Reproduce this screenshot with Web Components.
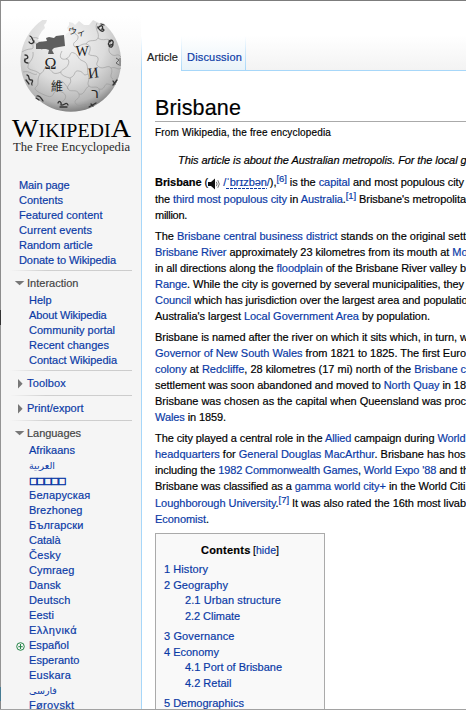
<!DOCTYPE html>
<html lang="en">
<head>
<meta charset="utf-8">
<title>Brisbane</title>
<style>
html,body{margin:0;height:710px;overflow:hidden;background:#fff}
body{font:11px/16px "Liberation Sans",Arial,sans-serif;color:#000;-webkit-text-stroke-width:.18px}
</style>
</head>
<body>
<wiki-page></wiki-page>
<script>
/* A run of text whose tracking is adjusted to occupy a given width. */
class FitLine extends HTMLElement {
  constructor() {
    super();
    this.attachShadow({mode: 'open'}).innerHTML = '<style>:host{display:inline-block;width:max-content;white-space:nowrap;vertical-align:baseline}</style><slot></slot>';
  }
  connectedCallback() { this.fit(this.getAttribute('w')); }
  fit(w) {
    if (!w) return;
    const inner = this.querySelector(':scope > slot');
    const text = inner ? inner.assignedNodes().map(n => n.textContent).join('') : this.textContent;
    this.style.letterSpacing = '0px';
    const natural = this.getBoundingClientRect().width;
    this.style.letterSpacing = ((w - natural) / [...text].length) + 'px';
  }
}
customElements.define('fit-line', FitLine);

const make = (name, html, setup) => customElements.define(name, class extends HTMLElement {
  constructor() {
    super();
    this.attachShadow({mode: 'open'}).innerHTML = html;
  }
  connectedCallback() { if (setup) setup.call(this); }
});

make('wiki-page', `
<style>
:host{display:grid;grid-template-columns:141px 325px;grid-template-rows:708px;width:466px;height:710px;box-sizing:border-box;border-top:1px solid #7c7c7c;border-bottom:1px solid #a2a2a2;overflow:hidden;position:relative;background:#fff}
.edge{position:absolute;left:0;top:0;width:1px;height:708px;background:linear-gradient(#8d8d8d 309px,#333 309px,#333 324px,#949494 324px,#949494 686px,#467b93 686px,#467b93 700px,#888 700px)}
</style>
<side-panel></side-panel><main-column></main-column><div class="edge"></div>`);

make('side-panel', `
<style>
:host{display:flex;flex-direction:column;box-sizing:border-box;height:708px;overflow:hidden;background:linear-gradient(#fff 0,#fff 15px,#f5f5f5 68px)}
wiki-logo{margin-bottom:16px}
.first{padding-left:19px;height:92px;flex:none}
</style>
<wiki-logo></wiki-logo>
<div class="first">
<nav-link w="50.5">Main page</nav-link><nav-link w="44">Contents</nav-link><nav-link w="83.5">Featured content</nav-link><nav-link w="73">Current events</nav-link><nav-link w="73.5">Random article</nav-link><nav-link w="97">Donate to Wikipedia</nav-link>
</div>
<nav-group open label="Interaction" w="51.5">
<nav-link w="22.5">Help</nav-link><nav-link w="77.5">About Wikipedia</nav-link><nav-link w="86">Community portal</nav-link><nav-link w="80">Recent changes</nav-link><nav-link w="88">Contact Wikipedia</nav-link>
</nav-group>
<nav-group label="Toolbox" w="39"></nav-group>
<nav-group label="Print/export" w="56.5"></nav-group>
<nav-group open label="Languages" w="54">
<nav-link w="46">Afrikaans</nav-link><nav-link style="font-family:'DejaVu Sans',sans-serif;font-size:9.5px;-webkit-text-stroke-width:0">العربية</nav-link><nav-link style="font-family:'DejaVu Sans',sans-serif;font-size:9.5px;-webkit-text-stroke-width:.5px" w="35.5">□□□□□</nav-link><nav-link w="61.5">Беларуская</nav-link><nav-link w="53.5">Brezhoneg</nav-link><nav-link w="54.5">Български</nav-link><nav-link w="31.5">Català</nav-link><nav-link w="32">Česky</nav-link><nav-link w="45.5">Cymraeg</nav-link><nav-link w="32">Dansk</nav-link><nav-link w="41.5">Deutsch</nav-link><nav-link w="25">Eesti</nav-link><nav-link w="48">Ελληνικά</nav-link><nav-link featured w="40">Español</nav-link><nav-link w="50.5">Esperanto</nav-link><nav-link w="42">Euskara</nav-link><nav-link style="font-family:'DejaVu Sans',sans-serif;font-size:9.5px;-webkit-text-stroke-width:0">فارسی</nav-link><nav-link w="45.5">Føroyskt</nav-link>
</nav-group>`);

make('nav-link', `
<style>
:host{display:block;height:15px;line-height:15px;white-space:nowrap;color:#0a3aa6;position:relative}
svg{position:absolute;left:-13px;top:4px;display:none}
:host([featured]) svg{display:block}
</style>
<svg width="9" height="9" viewBox="0 0 9 9" fill="none" stroke="#258548"><circle cx="4.5" cy="4.5" r="3.8"/><path d="M4.5 2v5M2.3 4.7h4.4"/></svg>
<fit-line><slot></slot></fit-line>`, function () {
  this.shadowRoot.querySelector('fit-line').fit(this.getAttribute('w'));
});

make('nav-group', `
<style>
:host{display:block;height:25px;flex:none;margin-top:0;background:linear-gradient(90deg,transparent 10px,#d0d0d0 46px,#cccccc 132px,transparent 132px) top/100% 1px no-repeat}
:host([open]){height:100px}
:host(:last-of-type){height:300px}
.head{display:flex;height:26px;padding:6px 0 0 14px;box-sizing:border-box;line-height:15px;align-items:start}
svg{width:13px;height:13px;flex:none}
.list{padding-left:29px;margin-top:-3px}
.label{color:#0a3aa6;white-space:nowrap}
:host([open]) .label{color:#444}
.down{display:none}:host([open]) .down{display:block}:host([open]) .right{display:none}
</style>
<div class="head"><svg class="down" viewBox="0 0 13 13"><path d="M.8 5h9.6L5.6 9.3z" fill="#777"/></svg><svg class="right" viewBox="0 0 13 13"><path d="M4 3v9.6l4.6-4.8z" fill="#777"/></svg><fit-line class="label"></fit-line></div>
<div class="list"><slot></slot></div>`, function () {
  const l = this.shadowRoot.querySelector('.label');
  l.textContent = this.getAttribute('label');
  l.fit(this.getAttribute('w'));
});

make('wiki-logo', `
<style>:host{display:block;height:161px;flex:none;-webkit-text-stroke-width:0}svg{display:block}text{font-family:"Liberation Serif",serif}</style>
<svg width="141" height="161" viewBox="0 1 141 161">
<defs>
<radialGradient id="g" cx=".45" cy=".3" r=".72"><stop offset="0" stop-color="#f4f4f4"/><stop offset=".55" stop-color="#dcdcdc"/><stop offset=".85" stop-color="#b5b5b5"/><stop offset="1" stop-color="#777"/></radialGradient>
<clipPath id="c"><path d="M0 20H47L46 23 44 25 45 28 42 31 39 36 38 40 42 42 64 40 66 34 69 32 67 28 69 25 69 22 73 23 75 25 79 21 84 25 89 25 93 20 99 23 141 20V120H0z"/></clipPath>
</defs>
<g clip-path="url(#c)"><circle cx="70.8" cy="61.5" r="50.3" fill="url(#g)"/>
<g fill="none" stroke="#999" stroke-width=".6">
<path d="M22 52C29 47 34 51 33 46S39 42 42 50M33 52C34 60 29 61 28 66S35 69 40 74C46 71 43 65 48 68S52 76 61 72M40 74C36 80 40 84 36 87S42 94 47 96"/>
<path d="M62 51C58 58 62 60 66 59S70 66 64 69 61 76 70 78C77 75 73 70 79 71S82 77 88 74M66 59C72 56 69 51 74 53S77 59 83 61 87 70 88 74"/>
<path d="M73 29C73 35 79 34 78 38S72 42 74 46 81 43 86 44 91 49 89 53 97 54 98 58 94 64 99 67 108 64 111 68 108 77 113 79"/>
<path d="M86 44C89 38 96 43 98 38S94 29 97 23M98 38C103 42 108 37 110 41S106 50 111 54 117 52 121 57M111 68C116 66 118 71 121 68"/>
<path d="M23 72C30 70 33 76 37 74M47 96C55 99 52 90 58 91S67 95 65 99 57 102 61 110M70 78C73 84 66 85 68 89S77 88 79 94 72 99 76 104 87 100 89 108M88 74C91 79 86 83 89 86S97 85 99 89 95 97 99 101"/>
<path d="M79 94C84 96 85 88 89 86M99 89C105 91 104 83 108 84S112 87 117 82M58 91C55 82 61 79 64 83S67 86 68 89M42 42C38 36 32 37 30 40"/>
</g></g>
<path d="M36 44 39 42 47 41 46 38 49 37 54 38 56 36 64 35 65 46 59 47 54 48 52 50 54 54 48 54 49 50 46 49 36 49z" fill="#5f5f5f"/>
<g fill="#242424" text-anchor="middle">
<text x="50.5" y="69" font-size="16">Ω</text><text x="82" y="56" font-size="14">W</text>
<text x="93.5" y="78" font-size="15" transform="rotate(-7 93 74)">И</text>
<text x="57" y="91" font-size="12" style="font-family:'Noto Sans CJK TC',sans-serif">維</text>
<text x="95" y="98" font-size="14" style="font-family:'DejaVu Sans',sans-serif">ר</text>
<text x="77" y="35" font-size="9" style="font-family:'Noto Sans CJK JP',sans-serif" transform="rotate(8 77 31)">ウィ</text>
<g fill="none" stroke="#333" stroke-width="1.3" stroke-linecap="round">
<path d="M30 36C33 37 32 40 34 42M29 42C31 45 34 43 34 41"/>
<path d="M25 55C28 55 29 58 26 59S25 63 28 63M25 59V62"/>
<path d="M27 75C31 76 27 80 31 80S30 84 32 85M26 80 29 84"/>
<path d="M98 28C101 24 104 26 102 29 106 29 103 33 100 30S98 26 98 28M104 25 101 24"/>
<path d="M109 41C113 38 115 44 111 45S108 42 111 41M113 44C113 47 111 48 109 46"/>
<path d="M37 96C40 95 41 98 43 101M36 98 39 100"/>
<path d="M58 103C59 100 62 102 61 105 64 106 66 101 68 105M60 107H67"/>
<path d="M89 107 96 103M91 104 93 106M113 85 117 80M113 81 115 84"/>
</g>
<path d="M116 58 119 60 116 63 119 65M120 58V66" fill="none" stroke="#666"/>
</g>
<text x="12" y="137" font-size="18.5" textLength="119" lengthAdjust="spacingAndGlyphs"><tspan font-size="26">W</tspan>IKIPEDI<tspan font-size="26">A</tspan></text>
<text x="13" y="151.3" font-size="13.3" textLength="117" lengthAdjust="spacingAndGlyphs" fill="#2a2a2a">The Free Encyclopedia</text>
</svg>`);

make('main-column', `
<style>
:host{display:flex;flex-direction:column;height:708px;overflow:hidden;background:linear-gradient(#a7d7f9,#a7d7f9) 0 70px/1px 100% no-repeat}
wiki-article{padding-left:14px}
</style>
<tab-bar></tab-bar><wiki-article></wiki-article>`);

make('tab-bar', `
<style>
:host{display:flex;height:70px;flex:none;align-items:flex-end;background:linear-gradient(#fff 34px,#f3f3f3 69px)}
.tab{height:35px;box-sizing:border-box;padding:13px 0 0 6px;white-space:nowrap;line-height:16px}
.a{width:41px;color:#222;background:linear-gradient(#fff0,#a7d7f9) right/1px 100% no-repeat,linear-gradient(#fff0,#a7d7f9) left/1px 100% no-repeat,#fff}
.d{width:64px;padding-left:5px;color:#0a3aa6;border-bottom:1px solid #a7d7f9;background:linear-gradient(#fff0,#a7d7f9) right/1px 100% no-repeat,linear-gradient(#fff,#e9f3f9)}
.rest{flex:1;height:1px;background:#a7d7f9}
</style>
<div class="tab a"><fit-line w="31">Article</fit-line></div><div class="tab d"><fit-line w="55">Discussion</fit-line></div><div class="rest"></div>`);

make('wiki-article', `
<style>
:host{display:flex;flex-direction:column}
h1{font:21.5px/30px "Liberation Sans",Arial,sans-serif;margin:22px 0 0;height:28px;border-bottom:1px solid #aaa;white-space:nowrap}
.from{line-height:14px;height:14px;margin-top:4px;font-size:10px}
section{margin:0 0 5px;display:grid;grid-auto-rows:min-content}
section div,.hat{height:16px;white-space:nowrap}
.hat{font-style:italic;padding-left:23px;margin:12px 0 6px}
.up{padding-top:1px}
a{color:#0a3aa6}
sup{font-size:9.5px;line-height:0;vertical-align:4px;color:#0a3aa6}
.spk{display:inline-block;vertical-align:-4px;width:13px;height:12px;line-height:0;margin:-4px 2px -4px 0}
.ipa{font-family:"Liberation Sans","DejaVu Sans",sans-serif;background:repeating-linear-gradient(90deg,#0a3aa6 0 3px,transparent 3px 4px) bottom/100% 1px no-repeat;padding-bottom:1px}
</style>
<h1><fit-line w="86">Brisbane</fit-line></h1>
<div class="from"><fit-line w="176">From Wikipedia, the free encyclopedia</fit-line></div>
<div class="hat"><fit-line w="288.5">This article is about the Australian metropolis. For the local g</fit-line></div>
<section>
<div><fit-line w="309"><b>Brisbane</b> (<span class="spk"><svg width="13" height="12" viewBox="0 0 13 12"><path d="M0 4h3l4-3.5v11L3 8H0z" fill="#111"/><path d="M8.3 3.8q1.6 2.2 0 4.4M9.8 2.2q3 3.8 0 7.6" fill="none" stroke="#777"/></svg></span><a>/<span class="ipa">ˈbrɪzbən</span>/</a>),<sup>[6]</sup> is the <a>capital</a> and most populous city</fit-line></div>
<div class="up"><fit-line w="311">the <a>third most populous city</a> in <a>Australia</a>.<sup>[1]</sup> Brisbane's metropolita</fit-line></div>
<div><fit-line w="32">million.</fit-line></div>
</section>
<section>
<div><fit-line w="311">The <a>Brisbane central business district</a> stands on the original sett</fit-line></div>
<div><fit-line w="312.5"><a>Brisbane River</a> approximately 23 kilometres from its mouth at <a>Mo</a></fit-line></div>
<div><fit-line w="311">in all directions along the <a>floodplain</a> of the Brisbane River valley b</fit-line></div>
<div><fit-line w="309"><a>Range</a>. While the city is governed by several municipalities, they</fit-line></div>
<div><fit-line w="312.5"><a>Council</a> which has jurisdiction over the largest area and populatio</fit-line></div>
<div><fit-line w="275">Australia's largest <a>Local Government Area</a> by population.</fit-line></div>
</section>
<section>
<div><fit-line w="313">Brisbane is named after the river on which it sits which, in turn, w</fit-line></div>
<div><fit-line w="311"><a>Governor of New South Wales</a> from 1821 to 1825. The first Euro</fit-line></div>
<div><fit-line w="311"><a>colony</a> at <a>Redcliffe</a>, 28 kilometres (17 mi) north of the <a>Brisbane c</a></fit-line></div>
<div><fit-line w="311">settlement was soon abandoned and moved to <a>North Quay</a> in 18</fit-line></div>
<div><fit-line w="311">Brisbane was chosen as the capital when Queensland was proc</fit-line></div>
<div><fit-line w="71"><a>Wales</a> in 1859.</fit-line></div>
</section>
<section>
<div><fit-line w="310.5">The city played a central role in the <a>Allied</a> campaign during <a>World</a></fit-line></div>
<div><fit-line w="310.5"><a>headquarters</a> for <a>General Douglas MacArthur</a>. Brisbane has hos</fit-line></div>
<div><fit-line w="314">including the <a>1982 Commonwealth Games</a>, <a>World Expo '88</a> and th</fit-line></div>
<div><fit-line w="310.5">Brisbane was classified as a <a>gamma world city+</a> in the World Citi</fit-line></div>
<div class="up"><fit-line w="311"><a>Loughborough University</a>.<sup>[7]</sup> It was also rated the 16th most livab</fit-line></div>
<div><fit-line w="54"><a>Economist</a>.</fit-line></div>
</section>
<toc-box></toc-box>`);

make('toc-box', `
<style>
:host{display:block;width:170px;height:190px;box-sizing:border-box;border:1px solid #aaa;background:#f9f9f9;padding:8px 0 0 8px;margin-top:1px;color:#0a3aa6}
div{height:16px;white-space:nowrap}
.t{color:#000;padding-left:37px;display:flex;gap:2.5px;margin-bottom:3px}
.s{padding-left:21px}.u{margin-top:-1px}.n{margin-top:4px}
a{color:#0a3aa6}
</style>
<div class="t"><fit-line w="49.5"><b>Contents</b></fit-line><fit-line w="26" style="font-size:10.5px">[<a>hide</a>]</fit-line></div>
<div><fit-line w="44">1 History</fit-line></div>
<div><fit-line w="64">2 Geography</fit-line></div>
<div class="s u"><fit-line w="96">2.1 Urban structure</fit-line></div>
<div class="s"><fit-line w="55">2.2 Climate</fit-line></div>
<div class="n"><fit-line w="70.5">3 Governance</fit-line></div>
<div><fit-line w="55">4 Economy</fit-line></div>
<div class="s u"><fit-line w="97">4.1 Port of Brisbane</fit-line></div>
<div class="s"><fit-line w="46.5">4.2 Retail</fit-line></div>
<div class="n"><fit-line w="80">5 Demographics</fit-line></div>`);
</script>
</body>
</html>
